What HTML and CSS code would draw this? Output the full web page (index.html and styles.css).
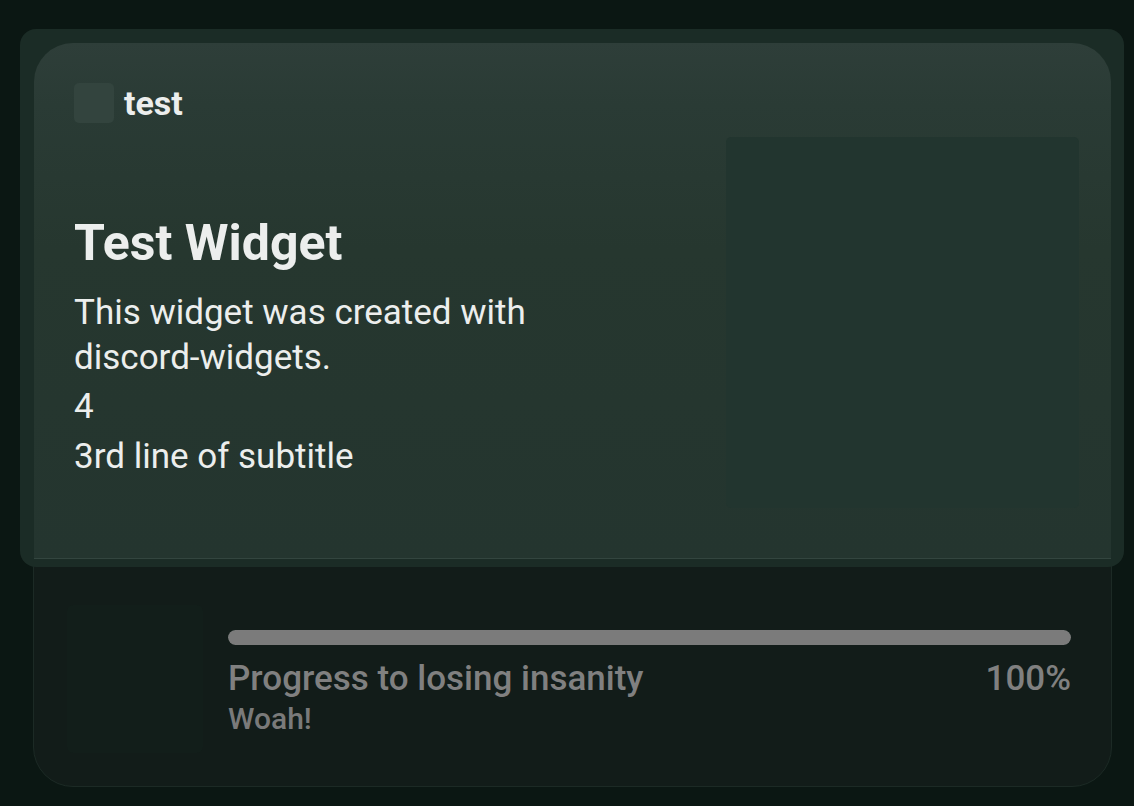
FILE: index.html
```html
<!DOCTYPE html>
<html lang="en">
<head>
  <meta charset="UTF-8">
  <meta name="viewport" content="width=device-width, initial-scale=1.0">
  <title>Test Widget</title>
  <link rel="stylesheet" href="styles.css">
</head>
<body>
  <div class="widget">
    <div class="hero">
      <div class="hero-head">
        <div class="author-icon"></div>
        <div class="author-name">test</div>
      </div>
      <div class="hero-body">
        <div class="hero-text">
          <div class="hero-title">Test Widget</div>
          <div class="hero-desc">This widget was created with discord&#8209;widgets.</div>
          <div class="hero-line">4</div>
          <div class="hero-line">3rd line of subtitle</div>
        </div>
        <div class="hero-image"></div>
      </div>
    </div>
    <div class="progress-area">
      <div class="progress-thumb"></div>
      <div class="progress-col">
        <div class="progress-track">
          <div class="progress-fill" style="width: 100%"></div>
        </div>
        <div class="progress-labels">
          <span>Progress to losing insanity</span>
          <span>100%</span>
        </div>
        <div class="progress-sub">Woah!</div>
      </div>
    </div>
  </div>
</body>
</html>
```

FILE: styles.css
```css
body {
  margin: 0;
  background: #0b1713;
  font-family: Roboto, "Noto Sans", sans-serif;
  color: #eceeed;
  height: 806px;
  overflow: hidden;
}
.widget {
  position: relative;
  z-index: 0;
  width: 1079px;
  height: 745px;
  margin: 42px 0 0 33px;
  box-sizing: border-box;
  background: #121c19;
  border: 1px solid #1c2a25;
  border-radius: 40px;
}
/* blurred backdrop behind the top panel */
.widget::before {
  content: "";
  position: absolute;
  z-index: -1;
  top: -14px;
  left: -14px;
  right: -13px;
  height: 538px;
  border-radius: 16px;
  background: #1b2c26;
}
.hero {
  height: 516px;
  box-sizing: border-box;
  padding: 40px 32px 0 40px;
  border-radius: 39px 39px 0 0;
  border-bottom: 1px solid #33453f;
  background: linear-gradient(180deg, #2e3e39 0%, #2a3b35 12%, #26372f 40%, #24352f 100%);
}
.hero-head {
  display: flex;
  align-items: center;
  gap: 10px;
  height: 40px;
}
.author-icon {
  width: 40px;
  height: 40px;
  border-radius: 5px;
  background: #33443e;
}
.author-name {
  font-size: 34px;
  font-weight: 700;
}
.hero-body {
  display: flex;
  justify-content: space-between;
  gap: 30px;
  margin-top: 14px;
}
.hero-text {
  flex: 1;
  padding-top: 76px;
}
.hero-title {
  font-size: 50px;
  line-height: 60px;
  font-weight: 700;
}
.hero-desc {
  margin-top: 17px;
  font-size: 35px;
  line-height: 45px;
}
.hero-line {
  font-size: 35px;
  line-height: 50px;
}
.hero-desc + .hero-line { margin-top: 2px; }
.hero-image {
  flex: 0 0 353px;
  height: 371px;
  border-radius: 5px;
  background: #22352f;
}
.progress-area {
  display: flex;
  gap: 25px;
  padding: 46px 40px 0 33px;
}
.progress-thumb {
  flex: 0 0 136px;
  height: 148px;
  border-radius: 6px;
  background: #121e1a;
}
.progress-col {
  flex: 1;
  padding-top: 25px;
  color: #808080;
}
.progress-track {
  height: 15px;
  border-radius: 8px;
  background: #3a4541;
  overflow: hidden;
}
.progress-fill {
  height: 100%;
  border-radius: 8px;
  background: #7b7b7b;
}
.progress-labels {
  display: flex;
  justify-content: space-between;
  margin-top: 14px;
  font-size: 35px;
  line-height: 40px;
  font-weight: 500;
}
.progress-sub {
  margin-top: 2px;
  font-size: 30px;
  line-height: 36px;
  font-weight: 500;
  color: #7a7a7a;
}
```
